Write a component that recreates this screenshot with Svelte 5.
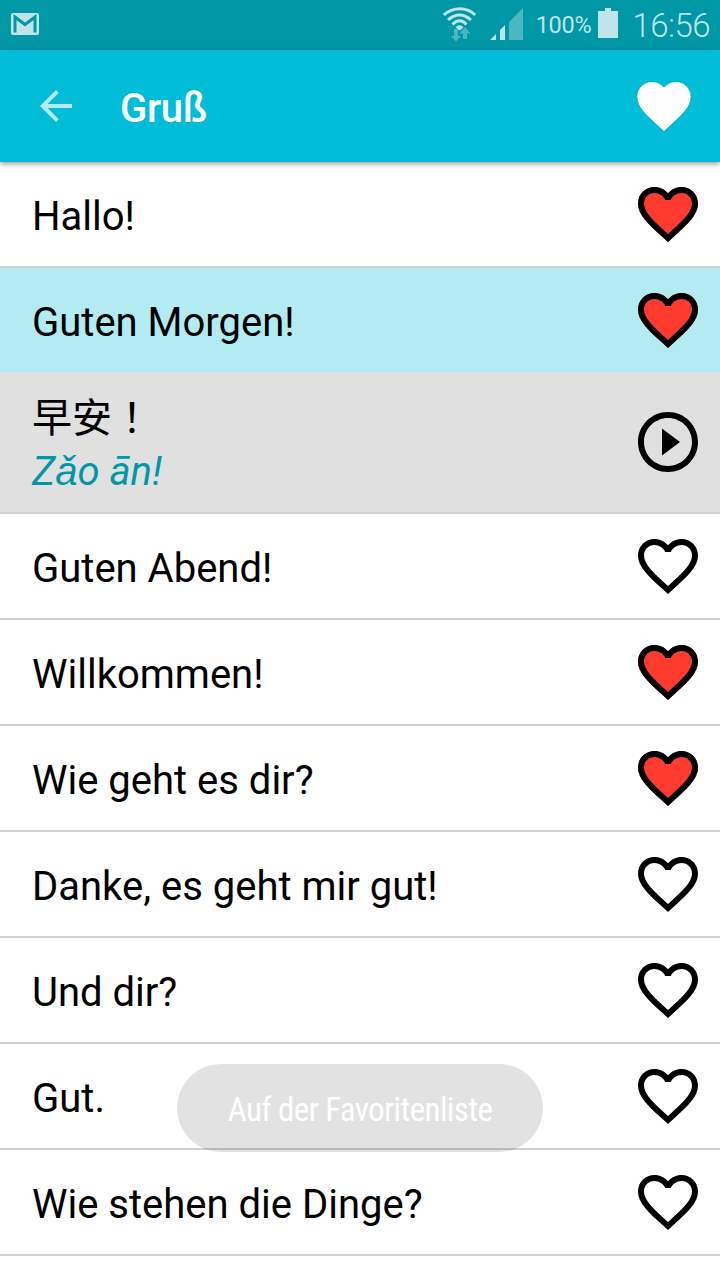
<script lang="ts">
    type Phrase = { text: string, favorite: boolean, hanzi?: string, pinyin?: string };

    const phrases: Phrase[] = [
        { text: "Hallo!", favorite: true },
        { text: "Guten Morgen!", favorite: true, hanzi: "早安！", pinyin: "Zǎo ān!" },
        { text: "Guten Abend!", favorite: false },
        { text: "Willkommen!", favorite: true },
        { text: "Wie geht es dir?", favorite: true },
        { text: "Danke, es geht mir gut!", favorite: false },
        { text: "Und dir?", favorite: false },
        { text: "Gut.", favorite: false },
        { text: "Wie stehen die Dinge?", favorite: false },
    ];

    let selected = $state(1);
</script>

{#snippet solidHeart()}
    <path d="M12 21.35l-1.45-1.32C5.4 15.36 2 12.28 2 8.5 2 5.42 4.42 3 7.5 3c1.74 0 3.41.81 4.5 2.09C13.09 3.81 14.76 3 16.5 3 19.58 3 22 5.42 22 8.5c0 3.78-3.4 6.86-8.55 11.54L12 21.35z" />
{/snippet}

<div class="screen">
    <div class="statusbar">
        <svg class="mail" viewBox="0 0 28 24" width="28" height="24">
            <rect x="0" y="1" width="28" height="22" rx="2" fill="#bfe5e9" />
            <path d="M4 20.500V5L14 12.500 24 5V20.500" fill="none" stroke="#0097a7" stroke-width="3" />
        </svg>
        <span class="spacer"></span>
        <svg class="wifi" viewBox="0 0 34 36" width="34" height="36">
            <g fill="none" stroke="#bfe5e9" stroke-width="3">
                <path d="M.8 9C10 .5 24 .5 32.200 9" />
                <path d="M5 14C12 7.200 21 7.200 28 14" />
                <path d="M9.500 18.500C14 13.500 19 13.500 23.500 18.500" />
            </g>
            <path d="M12.500 21Q16.500 17.500 20.500 21L17.500 24H15.500z" fill="#bfe5e9" />
            <path d="M11 23h4v7h3l-5 5.500-5-5.500h3zM20 33v-5.500h-3.500l5.500-6.500 5.500 6.500H24V33z" fill="#4db6c1" />
        </svg>
        <svg class="signal" viewBox="0 0 33 33" width="33" height="33">
            <path d="M0 32l6-6v6zM10 22l5-5v15h-5z" fill="#bfe5e9" />
            <path d="M19 14L33 0v32H19z" fill="#4db6c1" />
        </svg>
        <span class="percent">100%</span>
        <svg class="battery" viewBox="0 0 20 30" width="20" height="30">
            <path d="M0 3h7V0h6v3h7v27H0z" fill="#bfe5e9" />
        </svg>
        <span class="time">16:56</span>
    </div>

    <header>
        <svg viewBox="0 0 24 24" width="48" height="48" fill="#b2ebf2">
            <path d="M20 11H7.830l5.590-5.590L12 4l-8 8 8 8 1.410-1.410L7.830 13H20v-2z" />
        </svg>
        <h1>Gruß</h1>
        <svg viewBox="0 0 24 24" width="64" height="64" fill="#fff">
            {@render solidHeart()}
        </svg>
    </header>

    <main>
        {#each phrases as phrase, i}
            {@const open = i === selected && phrase.hanzi}
            <div class="row" class:selected={open}>
                <span>{phrase.text}</span>
                <svg viewBox="0 0 24 24" width="72" height="72">
                    {#if phrase.favorite}
                        <g fill="#ff3b2f">{@render solidHeart()}</g>
                    {/if}
                    <path d="M16.5 3c-1.740 0-3.410.81-4.500 2.090C10.910 3.810 9.240 3 7.500 3 4.420 3 2 5.420 2 8.500c0 3.780 3.400 6.860 8.550 11.540L12 21.350l1.450-1.320C18.600 15.360 22 12.280 22 8.500 22 5.420 19.580 3 16.500 3zm-4.400 15.550l-.1.1-.1-.1C7.140 14.240 4 11.390 4 8.500 4 6.500 5.500 5 7.500 5c1.540 0 3.040.99 3.570 2.360h1.870C13.460 5.990 14.960 5 16.500 5c2 0 3.500 1.500 3.500 3.500 0 2.890-3.140 5.740-7.900 10.050z" />
                </svg>
            </div>
            {#if open}
                <div class="row translation">
                    <div class="words">
                        <p class="hanzi">{phrase.hanzi}</p>
                        <p class="pinyin">{phrase.pinyin}</p>
                    </div>
                    <svg viewBox="0 0 24 24" width="72" height="72">
                        <path d="M10 16.500l6-4.500-6-4.500v9zM12 2C6.480 2 2 6.480 2 12s4.480 10 10 10 10-4.480 10-10S17.520 2 12 2zm0 18c-4.410 0-8-3.590-8-8s3.590-8 8-8 8 3.590 8 8-3.590 8-8 8z" />
                    </svg>
                </div>
            {/if}
        {/each}
    </main>

    <div class="toast">Auf der Favoritenliste</div>
</div>

<style>
    :global(body) {
        margin: 0;
        overflow: hidden;
    }

    .screen {
        position: relative;
        width: 720px;
        height: 1280px;
        overflow: hidden;
        background: white;
        color: black;
        font-family: Roboto, "Liberation Sans", sans-serif;
    }

    .statusbar {
        display: flex;
        align-items: center;
        box-sizing: border-box;
        height: 50px;
        padding: 0 10px 0 11px;
        background: #0097a7;
        color: #bfe5e9;
        white-space: nowrap;
    }
    .mail {
        margin-bottom: 2px;
    }
    .spacer {
        flex: 1;
    }
    .wifi {
        margin-right: 13px;
        margin-bottom: 3px;
    }
    .signal {
        margin-right: 13px;
        margin-bottom: 2px;
    }
    .percent {
        font-size: 23.5px;
        font-weight: 400;
        letter-spacing: -0.3px;
    }
    .battery {
        margin-left: 7px;
        margin-bottom: 4px;
    }
    .time {
        margin-left: 14px;
        font-size: 33px;
        font-weight: 300;
        letter-spacing: -0.5px;
    }

    header {
        position: relative;
        display: flex;
        align-items: center;
        box-sizing: border-box;
        height: 112px;
        padding: 0 24px 0 32px;
        background: #00bcd7;
        box-shadow: 0 2px 5px rgba(0, 0, 0, 0.4);
    }
    h1 {
        flex: 1;
        margin: 6px 0 0 40px;
        color: white;
        font-size: 40px;
        font-weight: 500;
        letter-spacing: -0.3px;
        line-height: 48px;
    }

    .row {
        display: flex;
        align-items: center;
        justify-content: space-between;
        height: 104px;
        padding: 0 16px 0 32px;
        border-bottom: 2px solid #d0d0d0;
        font-size: 40px;
        line-height: 48px;
    }
    .row span {
        margin-top: 6px;
    }
    .row.selected {
        border-bottom: none;
        background: #b2ebf2;
    }
    .row.translation {
        height: 140px;
        background: #e0e0e0;
    }
    .words {
        padding-top: 2px;
    }
    .words p {
        margin: 0;
        height: 54px;
        line-height: 54px;
    }
    .words .hanzi {
        height: 57px;
        font-family: "Noto Sans CJK TC", sans-serif;
    }
    .pinyin {
        color: #0097a7;
        font-style: italic;
    }

    .toast {
        position: absolute;
        left: 177px;
        top: 1064px;
        width: 366px;
        height: 88px;
        border-radius: 44px;
        background: rgba(0, 0, 0, 0.115);
        color: white;
        font-family: "Roboto Condensed", Roboto, sans-serif;
        font-size: 33px;
        font-stretch: condensed;
        letter-spacing: -0.6px;
        line-height: 91px;
        text-align: center;
        white-space: nowrap;
    }
</style>
